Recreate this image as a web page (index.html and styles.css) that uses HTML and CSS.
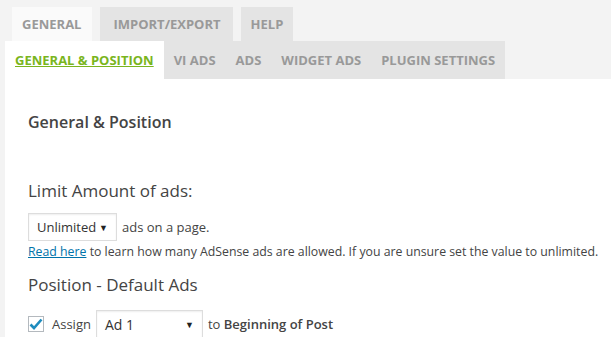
FILE: index.html
```html
<!DOCTYPE html>
<html lang="en">
<head>
  <meta charset="UTF-8" />
  <title>Quick AdSense Settings</title>
  <link rel="stylesheet" href="styles.css">
</head>
<body>
  <div class="wrap">
    <div class="main-tabs">
      <a class="main-tab active">General</a>
      <a class="main-tab">Import/Export</a>
      <a class="main-tab">Help</a>
    </div>
    <div class="sub-tabs">
      <a class="sub-tab active">General &amp; Position</a>
      <a class="sub-tab">vi ads</a>
      <a class="sub-tab">Ads</a>
      <a class="sub-tab">Widget Ads</a>
      <a class="sub-tab">Plugin Settings</a>
    </div>
    <div class="panel">
      <h2 class="panel-title">General &amp; Position</h2>

      <h3 class="section-title limit">Limit Amount of ads:</h3>
      <div class="row">
        <div class="select small">Unlimited <span class="arrow">&#9660;</span></div>
        <span>ads on a page.</span>
      </div>
      <p class="hint"><a href="#">Read here</a> to learn how many AdSense ads are allowed. If you are unsure set the value to unlimited.</p>

      <h3 class="section-title">Position - Default Ads</h3>
      <div class="row assign">
        <span class="checkbox">
          <svg width="14" height="12" viewBox="0 0 14 12"><path d="M1.5 6.5 L5 10 L12.5 1.5" fill="none" stroke="#1e8cbe" stroke-width="2.6"/></svg>
        </span>
        <span>Assign</span>
        <div class="select wide">Ad 1 <span class="arrow">&#9660;</span></div>
        <span>to <b>Beginning of Post</b></span>
      </div>
    </div>
  </div>
</body>
</html>
```

FILE: styles.css
```css
body {
  margin: 0;
  background: #f3f3f3;
  font-family: "Open Sans", "Noto Sans", sans-serif;
  color: #444;
}
.wrap {
  padding-left: 5px;
}
.main-tabs {
  display: flex;
  gap: 8px;
  padding: 7px 0 0 7px;
}
.main-tab {
  display: block;
  height: 34px;
  line-height: 34px;
  padding: 0 10px;
  background: #e4e4e4;
  color: #999;
  font-size: 13px;
  font-weight: 700;
  text-transform: uppercase;
}
.main-tab.active {
  background: #fafafa;
  padding-right: 11px;
}
.main-tab:nth-child(2) {
  padding: 0 12px 0 13px;
}
.sub-tabs {
  display: flex;
  width: max-content;
  background: #e4e4e4;
}
.sub-tab {
  display: block;
  height: 38px;
  line-height: 38px;
  padding: 0 10px;
  color: #999;
  font-size: 13px;
  font-weight: 700;
  text-transform: uppercase;
}
.sub-tab.active {
  background: #fff;
  color: #7ab51d;
  text-decoration: underline;
}
.panel {
  background: #fff;
  padding: 30px 23px 40px;
  min-height: 300px;
}
.panel-title {
  margin: 0;
  font-size: 16px;
  font-weight: 600;
  color: #444;
  line-height: 26px;
}
.section-title {
  margin: 0;
  font-size: 17px;
  font-weight: 400;
  color: #444;
  line-height: 26px;
}
.section-title.limit {
  margin-top: 43px;
}
.row {
  display: flex;
  align-items: center;
  gap: 5px;
  font-size: 13px;
  margin-top: 9px;
}
.select {
  display: flex;
  align-items: center;
  justify-content: space-between;
  box-sizing: border-box;
  height: 28px;
  padding: 0 8px;
  border: 1px solid #ddd;
  background: #fff;
  color: #333;
  box-shadow: inset 0 1px 2px rgba(0, 0, 0, 0.07);
}
.select.small {
  width: 89px;
}
.select.wide {
  width: 107px;
  font-size: 14px;
}
.arrow {
  font-size: 9px;
  color: #222;
}
.hint {
  margin: 2px -20px 11px 0;
  font-size: 12.3px;
  line-height: 18px;
  white-space: nowrap;
}
.hint a {
  color: #0073aa;
}
.row.assign {
  margin-top: 12px;
}
.checkbox {
  display: flex;
  align-items: center;
  justify-content: center;
  box-sizing: border-box;
  width: 16px;
  height: 16px;
  border: 1px solid #b4b9be;
  background: #fff;
  margin-right: 3px;
}
.assign b {
  font-weight: 600;
}
```
